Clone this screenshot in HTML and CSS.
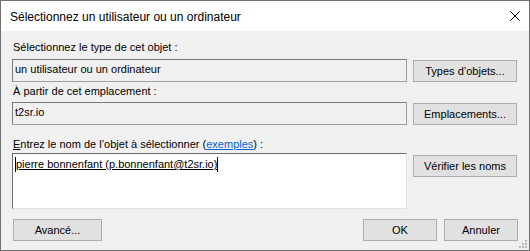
FILE: index.html
```html
<!DOCTYPE html>
<html lang="fr">
<head>
<meta charset="utf-8">
<title>Sélectionnez un utilisateur ou un ordinateur</title>
<link rel="stylesheet" href="styles.css">
</head>
<body>
<div class="window">
  <div class="titlebar">
    <span class="title">Sélectionnez un utilisateur ou un ordinateur</span>
    <svg class="close" width="10" height="10" viewBox="0 0 10 10"><path d="M0.5 0.5 L9.5 9.5 M9.5 0.5 L0.5 9.5" stroke="#000" stroke-width="1" fill="none"/></svg>
  </div>
  <div class="content">
    <div class="label l1">Sélectionnez le type de cet objet :</div>
    <div class="row r1">
      <div class="field">un utilisateur ou un ordinateur</div>
      <div class="btn side">Types d’objets...</div>
    </div>
    <div class="label l2">À partir de cet emplacement :</div>
    <div class="row r2">
      <div class="field">t2sr.io</div>
      <div class="btn side">Emplacements...</div>
    </div>
    <div class="label l3"><u>E</u>ntrez le nom de l’objet à sélectionner (<a class="link">exemples</a>) :</div>
    <div class="row r3">
      <div class="area"><span class="typed">pierre bonnenfant (p.bonnenfant@t2sr.io)</span></div>
      <div class="btn side">Vérifier les noms</div>
    </div>
    <div class="bottom">
      <div class="btn adv">Avancé...</div>
      <div class="spacer"></div>
      <div class="btn std">OK</div>
      <div class="btn std">Annuler</div>
    </div>
  </div>
  <svg class="grip" width="9" height="9" viewBox="0 0 9 9">
    <rect x="6" y="0" width="2" height="2" fill="#b9b9b9"/>
    <rect x="3" y="3" width="2" height="2" fill="#b9b9b9"/>
    <rect x="6" y="3" width="2" height="2" fill="#b9b9b9"/>
    <rect x="0" y="6" width="2" height="2" fill="#b9b9b9"/>
    <rect x="3" y="6" width="2" height="2" fill="#b9b9b9"/>
    <rect x="6" y="6" width="2" height="2" fill="#b9b9b9"/>
  </svg>
</div>
</body>
</html>
```

FILE: styles.css
```css
html, body {
  margin: 0;
  padding: 0;
  background: #ffffff;
}

.window {
  position: relative;
  width: 530px;
  height: 251px;
  box-sizing: border-box;
  border: 1px solid #6f6f6f;
  background: #f0f0f0;
  display: flex;
  flex-direction: column;
  font-family: "Liberation Sans Narrow", "Liberation Sans", Arial, sans-serif;
  font-size: 11px;
  color: #000;
}

.titlebar {
  height: 30px;
  background: #ffffff;
  display: flex;
  align-items: center;
  padding: 0 9px 0 9px;
  flex: none;
}

.title {
  font-family: "Liberation Sans", Arial, sans-serif;
  font-size: 12px;
  flex: 1;
  margin-top: 1px;
}

.close {
  display: block;
}

.content {
  flex: 1;
  display: flex;
  flex-direction: column;
  padding: 0 11px 0 11px;
}

.label {
  line-height: 13px;
  height: 13px;
  padding-left: 1px;
}

.l1 { margin-top: 10px; }
.l2 { margin-top: 3px; }
.l3 { margin-top: 13px; }

.row {
  display: flex;
  gap: 6px;
}

.r1 { margin-top: 5px; align-items: center; }
.r2 { margin-top: 4px; align-items: center; }
.r3 { margin-top: 2px; align-items: flex-start; }

.field {
  width: 395px;
  height: 23px;
  box-sizing: border-box;
  border: 1px solid;
  border-color: #7a7a7a #a0a0a0 #a0a0a0 #7a7a7a;
  background: #f0f0f0;
  line-height: 19px;
  padding-left: 2px;
}

.area {
  width: 395px;
  height: 56px;
  box-sizing: border-box;
  border: 1px solid;
  border-color: #6d6d6d #e3e3e3 #e3e3e3 #6d6d6d;
  background: #ffffff;
  padding: 3px 0 0 2px;
  line-height: 13px;
}

.typed {
  display: inline-block;
  text-decoration: underline;
  border-left: 1px solid #000;
  border-right: 1px solid #000;
  line-height: 15px;
  height: 15px;
}

.btn {
  box-sizing: border-box;
  height: 22px;
  border: 1px solid #adadad;
  background: #e1e1e1;
  display: flex;
  align-items: center;
  justify-content: center;
}

.side {
  width: 104px;
}

.r3 .side {
  margin-top: 2px;
}

.link {
  color: #0066cc;
  text-decoration: underline;
}

.bottom {
  display: flex;
  margin-top: 10px;
  gap: 7px;
  padding-left: 1px;
}

.adv { width: 89px; }
.std { width: 74px; }
.spacer { flex: 1; }

.grip {
  position: absolute;
  right: 1px;
  bottom: 1px;
}
```
